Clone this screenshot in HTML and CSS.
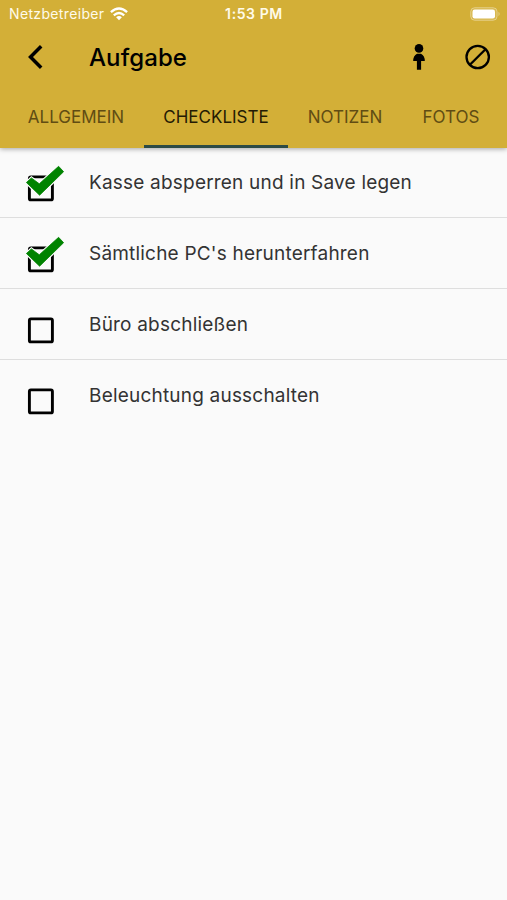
FILE: index.html
```html
<!DOCTYPE html>
<html lang="de">
<head>
<meta charset="utf-8">
<title>Aufgabe</title>
<link rel="stylesheet" href="styles.css">
</head>
<body>
<svg width="0" height="0" class="defs">
  <symbol id="box" viewBox="0 0 44 44"><rect x="8.4" y="13.9" width="23" height="23" rx="1.5" fill="none" stroke="#000" stroke-width="2.9"/></symbol>
  <symbol id="checked" viewBox="0 0 44 44"><rect x="8.4" y="13.9" width="23" height="23" rx="1.5" fill="none" stroke="#000" stroke-width="2.9"/><path d="M5.4 19.5L10.4 14.9L18.3 20.8L37.6 3.3L42.6 8.7L18.6 32.2Z" fill="#fafafa" stroke="#fafafa" stroke-width="3"/><path d="M5.4 19.5L10.4 14.9L18.3 20.8L37.6 3.3L42.6 8.7L18.6 32.2Z" fill="#008300" stroke="#008300" stroke-width=".8" stroke-linejoin="round"/></symbol>
</svg>
<header class="header">
  <div class="status">
    <div class="carrier"><span>Netzbetreiber</span>
      <svg class="wifi" width="18" height="14" viewBox="0 0 18 14"><g fill="none" stroke="#fff" stroke-width="2.3"><path d="M.9 5.2Q9-2.2 17.1 5.2"/><path d="M3.8 8.3Q9 3.7 14.2 8.3"/></g><path d="M9 13.2L6.1 10.3Q9 7.9 11.9 10.3Z" fill="#fff"/></svg>
    </div>
    <time class="clock">1:53 PM</time>
    <svg class="battery" width="31" height="14" viewBox="0 0 31 14"><rect x=".7" y=".7" width="26.4" height="12.6" rx="4" fill="#fff" fill-opacity=".12" stroke="#fff" stroke-opacity=".35"/><rect x="2.5" y="2.5" width="22.5" height="9" rx="2.2" fill="#fff"/><path d="M28.5 4.8Q30.8 7 28.5 9.2Z" fill="#fff" fill-opacity=".4"/></svg>
  </div>
  <div class="toolbar">
    <svg class="back" width="16" height="26" viewBox="0 0 16 26"><path d="M14.2 2.2L3.5 13L14.2 23.8" fill="none" stroke="#000" stroke-width="3.5"/></svg>
    <h1 class="title">Aufgabe</h1>
    <svg class="person" width="12" height="26" viewBox="0 0 12 26"><circle cx="6" cy="4.4" r="4.3"/><path d="M4 9.8H8Q11.8 11.8 11.8 17H8.1V25.7H3.9V17H.2Q.2 11.8 4 9.8Z"/></svg>
    <svg class="block" width="26" height="26" viewBox="0 0 26 26"><g fill="none" stroke="#000" stroke-width="2.3"><circle cx="12.7" cy="13" r="11.2"/><path d="M4.9 20.8L20.5 5.2"/></g></svg>
  </div>
  <nav class="tabs">
    <a class="tab general">ALLGEMEIN</a>
    <a class="tab checklist active">CHECKLISTE</a>
    <a class="tab notes">NOTIZEN</a>
    <a class="tab photos">FOTOS</a>
  </nav>
</header>
<ul class="list">
  <li class="row"><svg class="check"><use href="#checked"/></svg><span class="label">Kasse absperren und in Save legen</span></li>
  <li class="row"><svg class="check"><use href="#checked"/></svg><span class="label">Sämtliche PC's herunterfahren</span></li>
  <li class="row"><svg class="check"><use href="#box"/></svg><span class="label">Büro abschließen</span></li>
  <li class="row"><svg class="check"><use href="#box"/></svg><span class="label">Beleuchtung ausschalten</span></li>
</ul>
</body>
</html>
```
FILE: styles.css
```css
* { box-sizing: border-box; }
body { margin: 0; min-height: 900px; background: #fafafa; font-family: Inter, sans-serif; overflow: hidden; }
.defs { display: block; }
svg { flex: none; }
.header { height: 148px; background: #d3af37; box-shadow: 0 1px 5px rgba(0,0,0,.35); }
.status { display: grid; grid-template-columns: 1fr auto 1fr; align-items: center; height: 27px; padding: 0 6px 0 9px; color: #fffbea; font-size: 14px; line-height: 27px; }
.carrier { display: flex; align-items: center; gap: 6px; letter-spacing: .35px; }
.clock { margin-right: 2px; font-weight: 600; letter-spacing: .6px; }
.battery { justify-self: end; }
.toolbar { display: flex; align-items: center; height: 60px; padding: 0 16px 0 27px; }
.title { margin: 2px auto 0 46px; font-size: 24px; font-weight: 500; line-height: 30px; letter-spacing: .1px; }
.person { margin-right: 40px; }
.tabs { display: flex; height: 61px; }
.tab { display: flex; align-items: center; justify-content: center; flex: none; border-bottom: 3px solid transparent; font-size: 17px; color: #604c13; padding-top: 1px; }
.general { width: 144px; padding-left: 8px; }
.checklist { width: 144px; }
.notes { width: 114px; }
.photos { width: 98px; }
.active { color: #241b04; border-color: #2d4b45; }
.list { margin: -1px 0 0; padding: 0; list-style: none; }
.row { display: flex; height: 71px; padding-left: 21px; border-bottom: 1px solid #dedede; }
.row:last-child { border-bottom: 0; }
.check { width: 44px; height: 44px; margin-top: 16px; }
.label { margin-left: 24px; font-size: 19px; line-height: 71px; letter-spacing: .2px; color: #333; white-space: nowrap; }
```
